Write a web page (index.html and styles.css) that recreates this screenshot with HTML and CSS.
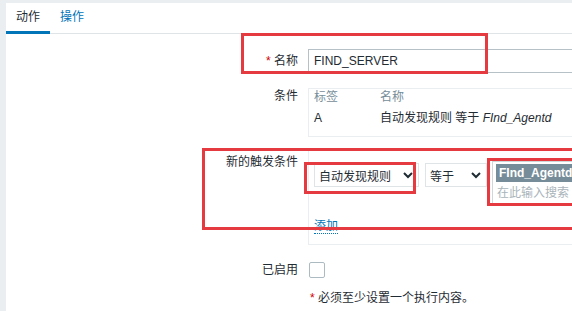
FILE: index.html
```html
<!DOCTYPE html>
<html lang="zh-CN">
<head>
  <meta charset="UTF-8">
  <title>动作</title>
  <link rel="stylesheet" href="styles.css">
</head>
<body>
  <div class="panel">
    <ul class="tabs">
      <li class="tab active">动作</li>
      <li class="tab">操作</li>
    </ul>

    <div class="form">
      <div class="form-row row-name">
        <label class="form-label"><span class="req">*</span> 名称</label>
        <div class="form-field">
          <div class="text-input">FIND_SERVER</div>
        </div>
      </div>

      <div class="form-row row-conditions">
        <label class="form-label">条件</label>
        <div class="form-field">
          <div class="cond-box">
            <div class="cond-line cond-head">
              <span class="cond-tag">标签</span>
              <span>名称</span>
            </div>
            <div class="cond-line">
              <span class="cond-tag">A</span>
              <span>自动发现规则 等于 <em>FInd_Agentd</em></span>
            </div>
          </div>
        </div>
      </div>

      <div class="form-row row-new">
        <label class="form-label">新的触发条件</label>
        <div class="form-field">
          <div class="new-box">
            <div class="new-controls">
              <div class="select select-type">
                <span>自动发现规则</span>
                <svg class="chevron" width="10" height="7" viewBox="0 0 10 7"><polyline points="1,1 5,5 9,1" fill="none" stroke="#1f2c33" stroke-width="2"/></svg>
              </div>
              <div class="select select-op">
                <span>等于</span>
                <svg class="chevron" width="10" height="7" viewBox="0 0 10 7"><polyline points="1,1 5,5 9,1" fill="none" stroke="#1f2c33" stroke-width="2"/></svg>
              </div>
              <div class="multiselect">
                <span class="ms-tag">FInd_Agentd</span>
                <span class="ms-placeholder">在此输入搜索</span>
              </div>
            </div>
            <a class="link-add">添加</a>
          </div>
        </div>
      </div>

      <div class="form-row row-enabled">
        <label class="form-label">已启用</label>
        <div class="form-field">
          <div class="checkbox"></div>
        </div>
      </div>

      <div class="form-row row-note">
        <div class="form-label"></div>
        <div class="form-field note"><span class="req">*</span> 必须至少设置一个执行内容。</div>
      </div>
    </div>
  </div>

  <!-- annotation boxes drawn over the screenshot -->
  <div class="mark mark-name"></div>
  <div class="mark mark-new"></div>
  <div class="mark mark-select"></div>
  <div class="mark mark-multi"></div>
</body>
</html>
```

FILE: styles.css
```css
:root {
  --text: #1f2c33;
  --muted: #768d99;
  --line: #ebeef0;
  --input-border: #b6c1c7;
  --blue: #0275b8;
  --mark: #e53a3f;
}

body {
  margin: 0;
  background: #ebeef0;
  font-family: "Liberation Sans", "Noto Sans CJK SC", sans-serif;
  font-size: 12px;
  color: var(--text);
  overflow: hidden;
  height: 311px;
}

.panel {
  margin: 3px 0 0 6px;
  background: #ffffff;
  height: 308px;
}

.tabs {
  display: flex;
  margin: 0;
  padding: 0;
  list-style: none;
  height: 30px;
  border-bottom: 1px solid #dfe4e7;
}

.tab {
  padding: 0 10px;
  height: 28px;
  line-height: 28px;
  color: var(--blue);
  border-bottom: 3px solid transparent;
}

.tab.active {
  color: var(--text);
  border-bottom-color: var(--blue);
}

.form-row {
  display: flex;
  align-items: flex-start;
}

.form-label {
  width: 292px;
  flex: none;
  text-align: right;
  line-height: 16px;
}

.form-field {
  margin-left: 10px;
  flex: 1;
}

.req {
  color: #d40000;
}

/* name */
.row-name {
  margin-top: 15px;
}
.row-name .form-label {
  line-height: 24px;
}
.text-input {
  box-sizing: border-box;
  height: 24px;
  line-height: 22px;
  width: 400px;
  padding: 0 5px;
  border: 1px solid var(--input-border);
}

/* conditions */
.row-conditions {
  margin-top: 15px;
}
.cond-box {
  box-sizing: border-box;
  width: 400px;
  height: 49px;
  border: 1px solid var(--line);
  padding: 0 5px;
}
.cond-line {
  display: flex;
  line-height: 16px;
}
.cond-line + .cond-line {
  margin-top: 5px;
}
.cond-head {
  color: var(--muted);
}
.cond-tag {
  width: 66px;
}
.cond-line em {
  font-style: italic;
}

/* new condition */
.row-new {
  margin-top: 13px;
}
.row-new .form-label {
  padding-top: 4px;
}
.new-box {
  box-sizing: border-box;
  width: 400px;
  height: 95px;
  border: 1px solid var(--line);
  padding: 12px 5px 0;
}
.new-controls {
  display: flex;
  align-items: flex-start;
}
.select {
  box-sizing: border-box;
  height: 24px;
  border: 1px solid #dfe4e7;
  display: flex;
  align-items: center;
  justify-content: space-between;
  padding: 0 5px 0 4px;
}
.select-type {
  width: 105px;
}
.select-op {
  width: 62px;
  margin-left: 6px;
}
.multiselect {
  box-sizing: border-box;
  margin-left: 5px;
  margin-top: -2px;
  width: 120px;
  height: 43px;
  border: 1px solid #cfd7db;
  padding: 2px 3px;
}
.ms-tag {
  display: block;
  height: 18px;
  line-height: 18px;
  background: var(--muted);
  color: #ffffff;
  padding: 0 3px;
  font-weight: bold;
  white-space: nowrap;
}
.ms-placeholder {
  display: block;
  margin-top: 3px;
  padding-left: 1px;
  color: #a9b4ba;
  line-height: 16px;
  white-space: nowrap;
}
.link-add {
  display: inline-block;
  margin-top: 15px;
  line-height: 14px;
  color: var(--blue);
  border-bottom: 1px dotted var(--blue);
}

/* enabled */
.row-enabled {
  margin-top: 17px;
}
.checkbox {
  box-sizing: border-box;
  width: 16px;
  height: 16px;
  margin-left: 1px;
  border: 1px solid #acbbc2;
  border-radius: 2px;
}

/* note */
.row-note {
  margin-top: 12px;
}
.note {
  line-height: 16px;
  padding-left: 2px;
}

/* red annotation frames */
.mark {
  position: absolute;
  border: 3px solid var(--mark);
  box-sizing: border-box;
}
.mark-name {
  left: 241px;
  top: 33px;
  width: 247px;
  height: 41px;
}
.mark-new {
  left: 202px;
  top: 148px;
  width: 400px;
  height: 82px;
}
.mark-select {
  left: 304px;
  top: 162px;
  width: 112px;
  height: 32px;
}
.mark-multi {
  left: 487px;
  top: 158px;
  width: 100px;
  height: 48px;
}
```
